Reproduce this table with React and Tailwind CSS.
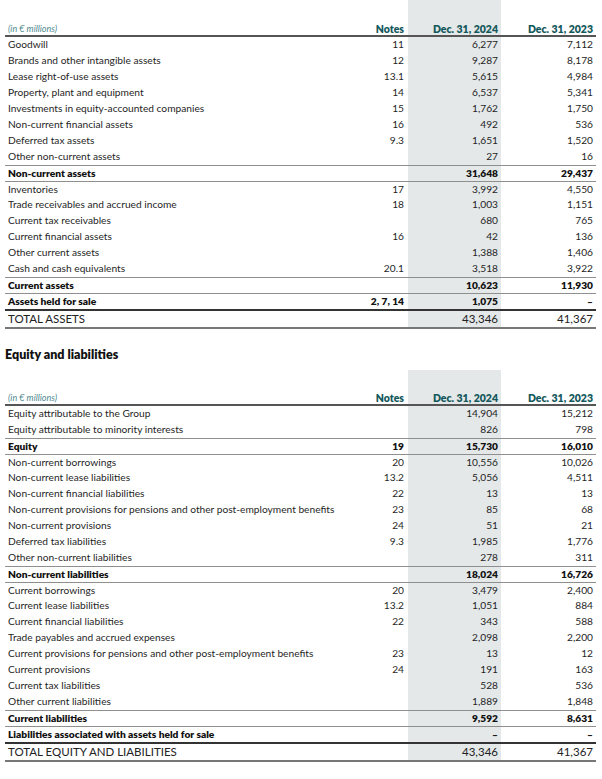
import React from "react";

const assets = [
  ["Goodwill", "11", "6,277", "7,112"],
  ["Brands and other intangible assets", "12", "9,287", "8,178"],
  ["Lease right-of-use assets", "13.1", "5,615", "4,984"],
  ["Property, plant and equipment", "14", "6,537", "5,341"],
  ["Investments in equity-accounted companies", "15", "1,762", "1,750"],
  ["Non-current financial assets", "16", "492", "536"],
  ["Deferred tax assets", "9.3", "1,651", "1,520"],
  ["Other non-current assets", "", "27", "16"],
  ["Non-current assets", "", "31,648", "29,437", true],
  ["Inventories", "17", "3,992", "4,550"],
  ["Trade receivables and accrued income", "18", "1,003", "1,151"],
  ["Current tax receivables", "", "680", "765"],
  ["Current financial assets", "16", "42", "136"],
  ["Other current assets", "", "1,388", "1,406"],
  ["Cash and cash equivalents", "20.1", "3,518", "3,922"],
  ["Current assets", "", "10,623", "11,930", true],
  ["Assets held for sale", "2, 7, 14", "1,075", "–", true],
];

const liabilities = [
  ["Equity attributable to the Group", "", "14,904", "15,212"],
  ["Equity attributable to minority interests", "", "826", "798"],
  ["Equity", "19", "15,730", "16,010", true],
  ["Non-current borrowings", "20", "10,556", "10,026"],
  ["Non-current lease liabilities", "13.2", "5,056", "4,511"],
  ["Non-current financial liabilities", "22", "13", "13"],
  ["Non-current provisions for pensions and other post-employment benefits", "23", "85", "68"],
  ["Non-current provisions", "24", "51", "21"],
  ["Deferred tax liabilities", "9.3", "1,985", "1,776"],
  ["Other non-current liabilities", "", "278", "311"],
  ["Non-current liabilities", "", "18,024", "16,726", true],
  ["Current borrowings", "20", "3,479", "2,400"],
  ["Current lease liabilities", "13.2", "1,051", "884"],
  ["Current financial liabilities", "22", "343", "588"],
  ["Trade payables and accrued expenses", "", "2,098", "2,200"],
  ["Current provisions for pensions and other post-employment benefits", "23", "13", "12"],
  ["Current provisions", "24", "191", "163"],
  ["Current tax liabilities", "", "528", "536"],
  ["Other current liabilities", "", "1,889", "1,848"],
  ["Current liabilities", "", "9,592", "8,631", true],
  ["Liabilities associated with assets held for sale", "", "–", "–", true],
];

const grid = "grid grid-cols-[1fr_68px_93px_95px]";

const Table = ({ rows, total, headerH }) => (
  <div className="mx-[5px] w-[591px]">
    {/* header */}
    <div className={`${grid} ${headerH} border-b-2 border-[#555]`}>
      <div className="flex items-end pl-[3px] text-[9px] italic leading-[12px] text-[#4f8a90]">
        (in € millions)
      </div>
      <div className="flex items-end justify-end pr-1 text-[10.5px] font-extrabold leading-[12px] text-[#14585c]">
        Notes
      </div>
      <div className="flex items-end justify-end bg-[#e4e8e9] pr-[3px] text-[10.5px] font-extrabold leading-[12px] text-[#14585c]">
        Dec. 31, 2024
      </div>
      <div className="flex items-end justify-end pr-[3px] text-[10.5px] font-extrabold leading-[12px] text-[#14585c]">
        Dec. 31, 2023
      </div>
    </div>

    {rows.map((r, i) => {
      const bold = r[4];
      const prevBold = i > 0 && rows[i - 1][4];
      const line = bold || prevBold ? "border-t border-[#8f8f8f]" : "";
      const weight = bold ? "font-extrabold text-[#111]" : "text-[#1f1f1f]";
      return (
        <div key={r[0]} className={`${grid} h-4 text-[10.2px] leading-[15px] ${line} ${weight}`}>
          <div className="truncate pl-[3px]">{r[0]}</div>
          <div className="pr-1 text-right">{r[1]}</div>
          <div className="bg-[#e4e8e9] pr-[3px] text-right">{r[2]}</div>
          <div className="pr-[3px] text-right">{r[3]}</div>
        </div>
      );
    })}

    {/* total */}
    <div className={`${grid} h-5 border-t-2 border-b-2 border-t-[#333] border-b-[#777] text-[11.5px] leading-4 text-[#222]`}>
      <div className="pl-[3px]">{total[0]}</div>
      <div />
      <div className="bg-[#e4e8e9] pr-[3px] text-right">{total[1]}</div>
      <div className="pr-[3px] text-right">{total[2]}</div>
    </div>
  </div>
);

export default function App() {
  return (
    <div className="min-h-[779px] w-[602px] bg-white font-['Lato',sans-serif]">
      <Table rows={assets} total={["TOTAL ASSETS", "43,346", "41,367"]} headerH="h-[37px]" />

      <h2 className="mx-[5px] mb-[7px] mt-[18px] h-4 text-[12.5px] font-extrabold leading-4 text-[#111]">
        Equity and liabilities
      </h2>

      <Table
        rows={liabilities}
        total={["TOTAL EQUITY AND LIABILITIES", "43,346", "41,367"]}
        headerH="h-[36px]"
      />
    </div>
  );
}
